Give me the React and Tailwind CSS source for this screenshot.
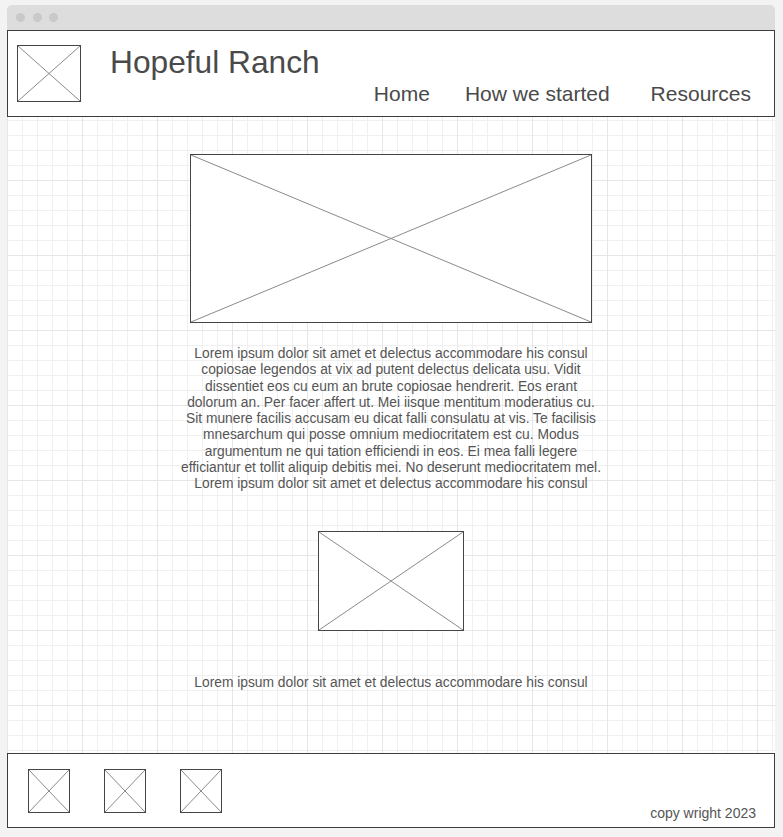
import React from "react";

function Placeholder({ className }) {
  return (
    <div className={"border border-[#454545] bg-white " + className}>
      <svg className="block h-full w-full" preserveAspectRatio="none" viewBox="0 0 100 100">
        <line x1="0" y1="0" x2="100" y2="100" stroke="#8a8a8a" strokeWidth="1" vectorEffect="non-scaling-stroke" />
        <line x1="100" y1="0" x2="0" y2="100" stroke="#8a8a8a" strokeWidth="1" vectorEffect="non-scaling-stroke" />
      </svg>
    </div>
  );
}

const lines = [
  "Lorem ipsum dolor sit amet et delectus accommodare his consul",
  "copiosae legendos at vix ad putent delectus delicata usu. Vidit",
  "dissentiet eos cu eum an brute copiosae hendrerit. Eos erant",
  "dolorum an. Per facer affert ut. Mei iisque mentitum moderatius cu.",
  "Sit munere facilis accusam eu dicat falli consulatu at vis. Te facilisis",
  "mnesarchum qui posse omnium mediocritatem est cu. Modus",
  "argumentum ne qui tation efficiendi in eos. Ei mea falli legere",
  "efficiantur et tollit aliquip debitis mei. No deserunt mediocritatem mel.",
  "Lorem ipsum dolor sit amet et delectus accommodare his consul",
];

export default function App() {
  return (
    <div className="h-[837px] w-[783px] overflow-hidden bg-[#f3f3f3] pt-[5px] font-['Liberation_Sans',Arial,sans-serif] text-[#4a4a4a]">
      <div className="ml-[7px] w-[768px]">
        <div className="flex h-[25px] items-center gap-[7.5px] rounded-t-[5px] bg-[#dddddd] pl-[9px]">
          <span className="h-[9px] w-[9px] rounded-full bg-[#c9c9c9]" />
          <span className="h-[9px] w-[9px] rounded-full bg-[#c9c9c9]" />
          <span className="h-[9px] w-[9px] rounded-full bg-[#c9c9c9]" />
        </div>
        <div className="bg-white bg-[linear-gradient(to_right,#e6e6e6_1px,transparent_1px),linear-gradient(to_bottom,#e6e6e6_1px,transparent_1px),linear-gradient(to_right,#f0f0f0_1px,transparent_1px),linear-gradient(to_bottom,#f0f0f0_1px,transparent_1px)] bg-size-[75px_75px,75px_75px,15px_15px,15px_15px]">
          <header className="flex h-[87px] items-start border border-[#3d3d3d] bg-white">
            <Placeholder className="ml-[9px] mt-[14px] h-[57px] w-[64px]" />
            <div className="ml-[29px] mt-[16px] text-[31.7px] leading-none">Hopeful Ranch</div>
            <nav className="ml-auto mr-[23px] mt-[52px] flex text-[21px] leading-none">
              <span>Home</span>
              <span className="ml-[35px]">How we started</span>
              <span className="ml-[41px]">Resources</span>
            </nav>
          </header>
          <main className="flex h-[636px] flex-col items-center">
            <Placeholder className="mt-[37px] h-[169px] w-[402px]" />
            <div className="mt-[23px] flex flex-col items-center text-[13.8px] leading-[16.3px] text-[#555]">
              {lines.map((l, i) => (
                <div key={i} className="whitespace-nowrap">{l}</div>
              ))}
            </div>
            <Placeholder className="mt-[38px] h-[100px] w-[146px]" />
            <div className="mt-[44px] whitespace-nowrap text-[13.8px] leading-[16.3px] text-[#555]">
              Lorem ipsum dolor sit amet et delectus accommodare his consul
            </div>
          </main>
          <footer className="flex h-[75px] items-start border border-[#3d3d3d] bg-white pl-[20px] pt-[15px]">
            <Placeholder className="h-[44px] w-[42px]" />
            <Placeholder className="ml-[34px] h-[44px] w-[42px]" />
            <Placeholder className="ml-[34px] h-[44px] w-[42px]" />
            <div className="ml-auto mr-[18px] mt-[37px] text-[14px] leading-none text-[#555]">copy wright 2023</div>
          </footer>
        </div>
      </div>
    </div>
  );
}
